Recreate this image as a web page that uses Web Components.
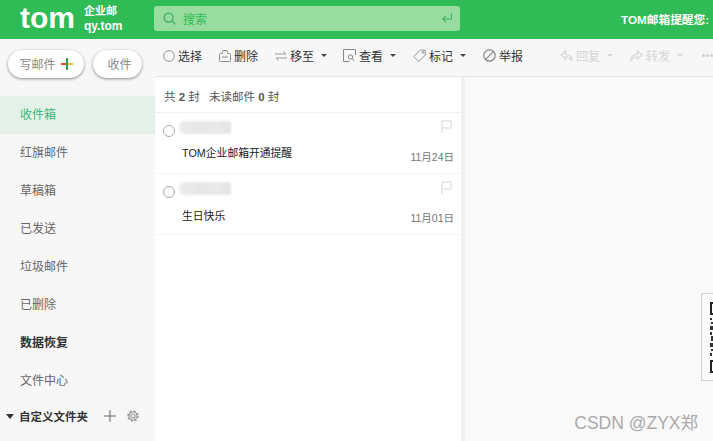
<!DOCTYPE html>
<html lang="zh">
<head>
<meta charset="utf-8">
<title>TOM企业邮</title>
<style>
  html, body { margin: 0; height: 100%; overflow: hidden; }
  body {
    font-family: "Liberation Sans", "Noto Sans CJK SC", sans-serif;
    font-size: 12px;
    background: #f9f9f9;
  }
</style>
</head>
<body>
<mail-app>
  <mail-header slot="header"></mail-header>
  <mail-sidebar slot="sidebar">
    <nav-item active>收件箱</nav-item>
    <nav-item>红旗邮件</nav-item>
    <nav-item>草稿箱</nav-item>
    <nav-item>已发送</nav-item>
    <nav-item>垃圾邮件</nav-item>
    <nav-item>已删除</nav-item>
    <nav-item strong>数据恢复</nav-item>
    <nav-item>文件中心</nav-item>
  </mail-sidebar>
  <mail-toolbar slot="toolbar"></mail-toolbar>
  <mail-list slot="list">
    <mail-row subject="TOM企业邮箱开通提醒" date="11月24日"></mail-row>
    <mail-row subject="生日快乐" date="11月01日" style="--subject-top: 3px"></mail-row>
  </mail-list>
  <qr-tab slot="preview"></qr-tab>
</mail-app>
<script>
const appTemplate = document.createElement('template');
appTemplate.innerHTML = `
<style>
  :host {
    display: grid;
    grid-template-columns: 155px 306px 4px 1fr;
    grid-template-rows: 39px 38px 1fr;
    height: 441px;
    width: 713px;
    overflow: hidden;
    position: relative;
  }
  ::slotted([slot=header]) { grid-column: 1 / -1; }
  ::slotted([slot=sidebar]) { grid-row: 2 / 4; }
  ::slotted([slot=toolbar]) { grid-column: 2 / -1; }
  .gap { background: #f1f1f1; }
  .preview { background: #f9f9f9; position: relative; overflow: hidden; }
  .mark {
    position: absolute;
    right: 15px;
    bottom: 8px;
    font-size: 17.5px;
    line-height: 20px;
    color: #aaa;
  }
</style>
<slot name="header"></slot>
<slot name="sidebar"></slot>
<slot name="toolbar"></slot>
<slot name="list"></slot>
<div class="gap"></div>
<div class="preview"><slot name="preview"></slot></div>
<span class="mark">CSDN @ZYX郑</span>`;

class MailApp extends HTMLElement {
  constructor() {
    super();
    this.attachShadow({mode: 'open'});
    this.shadowRoot.appendChild(appTemplate.content.cloneNode(true));
  }
}

const headerTemplate = document.createElement('template');
headerTemplate.innerHTML = `
<style>
  :host {
    display: flex;
    align-items: center;
    background: #2fbb55;
    color: #fff;
    height: 39px;
  }
  .logo {
    font-weight: 700;
    font-size: 30px;
    line-height: 30px;
    margin-left: 20px;
    width: 64px;
    margin-top: -3px;
    white-space: nowrap;
  }
  .sub {
    font-weight: 700;
    font-size: 11px;
    line-height: 15px;
    width: 70px;
    margin-top: -1px;
    white-space: nowrap;
  }
  .sub .dom { font-size: 12px; }
  .search {
    display: flex;
    align-items: center;
    width: 306px;
    height: 25px;
    margin-top: -3px;
    border-radius: 3px;
    background: #98dca0;
    color: #2fbb55;
    box-sizing: border-box;
    padding: 0 8px 0 9px;
    gap: 7px;
  }
  .search span { flex: 1; }
  .notice {
    margin-left: auto;
    font-weight: 700;
    font-size: 11.7px;
    white-space: nowrap;
    width: 92px;
    margin-top: -3px;
  }
</style>
<div class="logo">tom</div>
<div class="sub">企业邮<br><span class="dom">qy.tom</span></div>
<div class="search">
  <svg width="13" height="13" viewBox="0 0 13 13" fill="none" stroke="#3fae62" stroke-width="1.3"><circle cx="5.6" cy="5.6" r="4.5"/><path d="M9 9l3.4 3.4"/></svg>
  <span>搜索</span>
  <svg width="10" height="11" viewBox="0 0 10 11" fill="none" stroke="#3fae62" stroke-width="1.1"><path d="M9.4 .5v5.5H.8M4 2.8L.8 6 4 9.2"/></svg>
</div>
<div class="notice">TOM邮箱提醒您:</div>`;

class MailHeader extends HTMLElement {
  constructor() {
    super();
    this.attachShadow({mode: 'open'});
    this.shadowRoot.appendChild(headerTemplate.content.cloneNode(true));
  }
}

const sidebarTemplate = document.createElement('template');
sidebarTemplate.innerHTML = `
<style>
  :host {
    display: flex;
    flex-direction: column;
    background: #f7f7f7;
    min-height: 0;
  }
  .actions {
    display: flex;
    gap: 9px;
    padding: 11px 0 0 8px;
    height: 46px;
  }
  .btn {
    display: flex;
    align-items: center;
    justify-content: center;
    gap: 5px;
    height: 28px;
    box-sizing: border-box;
    padding-bottom: 1px;
    border-radius: 14px;
    background: #fff;
    box-shadow: 0 1px 3px rgba(0, 0, 0, .45);
    color: #888;
  }
  .write { width: 76px; }
  .receive { width: 49px; padding-left: 4px; }
  .folders {
    display: flex;
    align-items: center;
    height: 32px;
    padding-left: 6px;
    color: #333;
    font-weight: 700;
    font-size: 11.5px;
  }
  .arrow {
    width: 0;
    height: 0;
    border: 4.5px solid transparent;
    border-top: 5px solid #333;
    border-bottom: 0;
    margin-right: 5px;
  }
  .plus { margin-left: 16px; }
  .gear { margin-left: 11px; }
</style>
<div class="actions">
  <div class="btn write">写邮件
    <svg width="12" height="12" viewBox="0 0 12 12"><rect x="0" y="5" width="6" height="2" fill="#e64a3b"/><rect x="6" y="5" width="6" height="2" fill="#f3c02f"/><rect x="5" y="0" width="2" height="12" fill="#2f9e55"/></svg>
  </div>
  <div class="btn receive">收件</div>
</div>
<slot></slot>
<div class="folders">
  <span class="arrow"></span>自定义文件夹
  <svg class="plus" width="12" height="12" viewBox="0 0 12 12" stroke="#666" stroke-width="1"><path d="M6 0v12M0 6h12"/></svg>
  <svg class="gear" width="12" height="12" viewBox="0 0 12 12" fill="none" stroke="#999" stroke-width="1.2"><circle cx="6" cy="6" r="2"/><circle cx="6" cy="6" r="4"/><circle cx="6" cy="6" r="5" stroke-width="1.6" stroke-dasharray="2 1.93"/></svg>
</div>`;

class MailSidebar extends HTMLElement {
  constructor() {
    super();
    this.attachShadow({mode: 'open'});
    this.shadowRoot.appendChild(sidebarTemplate.content.cloneNode(true));
  }
}

const navTemplate = document.createElement('template');
navTemplate.innerHTML = `
<style>
  :host {
    display: flex;
    align-items: center;
    height: 38px;
    box-sizing: border-box;
    padding: 0 0 4px 20px;
    color: #666;
    flex: none;
  }
  :host([active]) { background: #e4f1e8; color: #3cb878; }
  :host([strong]) { color: #333; font-weight: 700; }
</style>
<slot></slot>`;

class NavItem extends HTMLElement {
  constructor() {
    super();
    this.attachShadow({mode: 'open'});
    this.shadowRoot.appendChild(navTemplate.content.cloneNode(true));
  }
}

const toolbarTemplate = document.createElement('template');
toolbarTemplate.innerHTML = `
<style>
  :host {
    display: flex;
    align-items: center;
    gap: 17px;
    height: 38px;
    box-sizing: border-box;
    padding: 0 0 4px 8px;
    background: #f7f7f7;
    border-bottom: 1px solid #e2e2e8;
    white-space: nowrap;
    overflow: hidden;
  }
  .sep { width: 2px; height: 13px; background: #e3e3e3; margin: 0 2px 0 1px; }
  .dots { margin-left: 2px; flex: none; }
</style>
<tool-item>
  <svg width="12" height="12" viewBox="0 0 12 12" fill="none" stroke="#999"><circle cx="6" cy="6" r="5.4"/></svg>选择
</tool-item>
<tool-item>
  <svg width="12" height="12" viewBox="0 0 12 12" fill="none" stroke="#888"><path d="M.5 4.5a1 1 0 0 1 1-1H3L4 .5h4l1 3h1.5a1 1 0 0 1 1 1v6a1 1 0 0 1-1 1h-9a1 1 0 0 1-1-1zM3 7h6"/></svg>删除
</tool-item>
<tool-item caret>
  <svg width="12" height="12" viewBox="0 0 12 12" fill="none" stroke="#999"><path d="M0 4h11L8.5 1.5M12 8H1l2.5 2.5"/></svg>移至
</tool-item>
<tool-item caret style="margin-left:-1px">
  <svg width="13" height="13" viewBox="0 0 13 13" fill="none" stroke="#888"><path d="M12.5 6V.5H.5v12h6"/><circle cx="7.5" cy="8" r="2.2"/><path d="M9 9.6L11.5 12"/></svg>查看
</tool-item>
<tool-item caret>
  <svg width="13" height="13" viewBox="0 0 13 13" fill="none" stroke="#999"><path d="M.8 7.5L7.3 1h5v5L5.8 12.5z"/><circle cx="10" cy="3.3" r="1"/></svg>标记
</tool-item>
<tool-item>
  <svg width="13" height="13" viewBox="0 0 13 13" fill="none" stroke="#888" stroke-width="1.2"><circle cx="6.5" cy="6.5" r="5.7"/><path d="M2.6 10.4l7.8-7.8"/></svg>举报
</tool-item>
<span class="sep"></span>
<tool-item disabled caret>
  <svg width="13" height="12" viewBox="0 0 13 12" fill="none" stroke="#d9d9d9" stroke-width="1.3"><path d="M5.5 1L1 5l4.5 4V6.8c3 0 5 1 6.5 4.2 0-4-2.5-6.5-6.5-6.8z"/></svg>回复
</tool-item>
<tool-item disabled caret>
  <svg width="13" height="12" viewBox="0 0 13 12" fill="none" stroke="#d9d9d9" stroke-width="1.3"><path d="M7.5 1L12 5l-4.5 4V6.8c-3 0-5 1-6.5 4.2 0-4 2.5-6.5 6.5-6.8z"/></svg>转发
</tool-item>
<svg class="dots" width="11" height="3" viewBox="0 0 11 3" fill="#d0d0d0"><circle cx="1.5" cy="1.5" r="1.5"/><circle cx="5.5" cy="1.5" r="1.5"/><circle cx="9.5" cy="1.5" r="1.5"/></svg>`;

class MailToolbar extends HTMLElement {
  constructor() {
    super();
    this.attachShadow({mode: 'open'});
    this.shadowRoot.appendChild(toolbarTemplate.content.cloneNode(true));
  }
}

const toolTemplate = document.createElement('template');
toolTemplate.innerHTML = `
<style>
  :host {
    display: inline-flex;
    align-items: center;
    color: #333;
  }
  :host([disabled]) { color: #d5d5d5; }
  ::slotted(svg) { margin-right: 3px; flex: none; }
  .caret {
    display: none;
    width: 0;
    height: 0;
    margin-left: 7px;
    border: 3px solid transparent;
    border-top: 3px solid #444;
    border-bottom: 0;
  }
  :host([caret]) .caret { display: block; }
  :host([disabled]) .caret { border-top-color: #d5d5d5; }
</style>
<slot></slot><span class="caret"></span>`;

class ToolItem extends HTMLElement {
  constructor() {
    super();
    this.attachShadow({mode: 'open'});
    this.shadowRoot.appendChild(toolTemplate.content.cloneNode(true));
  }
}

const listTemplate = document.createElement('template');
listTemplate.innerHTML = `
<style>
  :host { display: block; background: #fff; }
  .count {
    height: 35px;
    line-height: 41px;
    padding-left: 9px;
    color: #555;
    border-bottom: 1px solid #f1f1f1;
    font-size: 11.5px;
  }
  .unread { margin-left: 6px; }
</style>
<div class="count">共 <b>2</b> 封 <span class="unread">未读邮件 <b>0</b> 封</span></div>
<slot></slot>`;

class MailList extends HTMLElement {
  constructor() {
    super();
    this.attachShadow({mode: 'open'});
    this.shadowRoot.appendChild(listTemplate.content.cloneNode(true));
  }
}

const rowTemplate = document.createElement('template');
rowTemplate.innerHTML = `
<style>
  :host {
    display: grid;
    grid-template-columns: 27px 1fr auto;
    grid-template-rows: 31px 30px;
    height: 61px;
    box-sizing: border-box;
    padding: 0 7px 0 8px;
    border-bottom: 1px solid #f4f4f4;
  }
  .radio {
    width: 12px;
    height: 12px;
    border: 1px solid #aaa;
    border-radius: 50%;
    align-self: end;
    margin-bottom: 7px;
    box-sizing: border-box;
  }
  .sender {
    width: 52px;
    height: 13px;
    margin-left: -11px;
    align-self: end;
    margin-bottom: 10px;
    background: linear-gradient(90deg, #ececec, #e6e6e6 40%, #eaeaea 70%, #e4e4e4);
    border-radius: 6px 2px 2px 6px;
    filter: blur(.8px);
  }
  .flag { justify-self: end; align-self: end; margin: 0 2px 11px 0; }
  .subject {
    grid-column: 1 / 3;
    padding-left: 19px;
    color: #222;
    font-size: 10.8px;
    line-height: 16px;
    margin-top: var(--subject-top, 1px);
  }
  .date {
    color: #777;
    font-size: 10.5px;
    line-height: 14px;
    margin-top: 6px;
    white-space: nowrap;
  }
</style>
<span class="radio"></span>
<span class="sender"></span>
<svg class="flag" width="11" height="13" viewBox="0 0 11 13" fill="none" stroke="#d6d6d6"><path d="M1 13V1h9v7H1"/></svg>
<span class="subject"></span>
<span class="date"></span>`;

class MailRow extends HTMLElement {
  constructor() {
    super();
    this.attachShadow({mode: 'open'});
    this.shadowRoot.appendChild(rowTemplate.content.cloneNode(true));
  }

  connectedCallback() {
    this.shadowRoot.querySelector('.subject').textContent = this.getAttribute('subject');
    this.shadowRoot.querySelector('.date').textContent = this.getAttribute('date');
  }
}

const qrTemplate = document.createElement('template');
qrTemplate.innerHTML = `
<style>
  :host {
    position: absolute;
    left: 236px;
    top: 216px;
    width: 30px;
    height: 88px;
    box-sizing: border-box;
    border: 1px solid #d0d0d0;
    background: #fafafa;
  }
  svg { display: block; margin: 8px 0 0 8px; }
</style>
<svg width="6" height="72" viewBox="0 0 6 72">
  <path d="M1 1h8v11H1zM1 59h8v11H1z" fill="none" stroke="#222" stroke-width="2"/>
  <path d="M0 16h2v2H0zM1 20h2v2H1zM0 24h3v4H0zM0 30h2v3H0zM1 34h2v5H1zM0 41h3v4H0zM1 47h2v2H1zM0 51h2v3H0z" fill="#333"/>
</svg>`;

class QrTab extends HTMLElement {
  constructor() {
    super();
    this.attachShadow({mode: 'open'});
    this.shadowRoot.appendChild(qrTemplate.content.cloneNode(true));
  }
}

window.customElements.define('mail-app', MailApp);
window.customElements.define('mail-header', MailHeader);
window.customElements.define('mail-sidebar', MailSidebar);
window.customElements.define('nav-item', NavItem);
window.customElements.define('mail-toolbar', MailToolbar);
window.customElements.define('tool-item', ToolItem);
window.customElements.define('mail-list', MailList);
window.customElements.define('mail-row', MailRow);
window.customElements.define('qr-tab', QrTab);
</script>
</body>
</html>
